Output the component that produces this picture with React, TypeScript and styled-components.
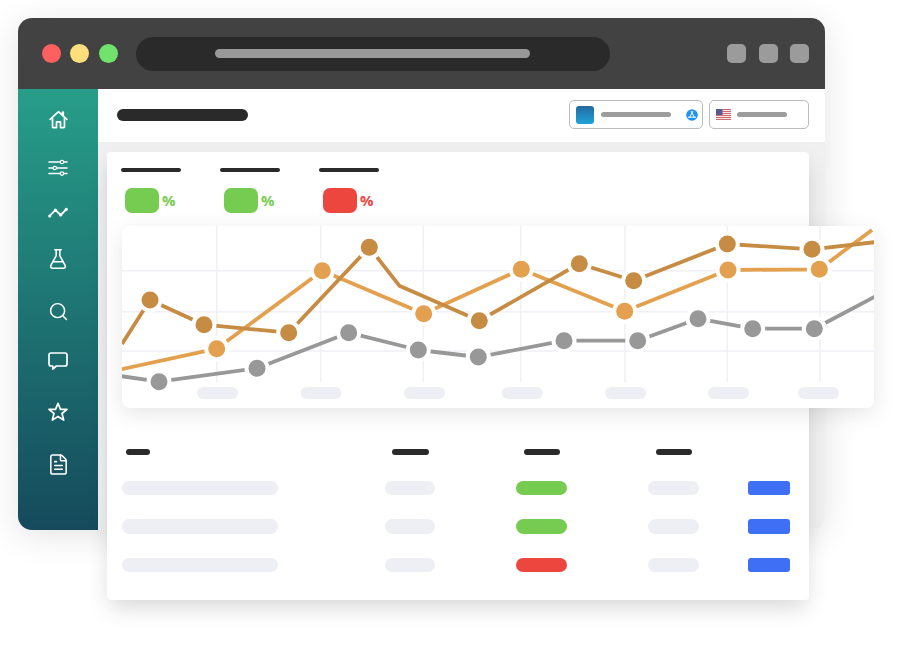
import React from "react";
import styled, { createGlobalStyle } from "styled-components";
import { FlaskConical, Search, FileText } from "lucide-react";

const GlobalStyle = createGlobalStyle`
  html, body { margin: 0; padding: 0; background: #fff; }
  body { font-family: "Open Sans", "Liberation Sans", sans-serif; }
`;

const Page = styled.div`
  width: 900px;
  height: 650px;
  padding: 18px 0 0 18px;
  box-sizing: border-box;
  overflow: hidden;
`;

const BrowserWindow = styled.div`
  width: 807px;
  height: 512px;
  display: flex;
  flex-direction: column;
  border-radius: 14px;
  box-shadow: 0 6px 34px rgba(0, 0, 0, 0.11);
`;

const TitleBar = styled.header`
  height: 71px;
  flex: none;
  display: flex;
  align-items: center;
  padding: 0 16px 0 23.5px;
  background: #424242;
  border-radius: 14px 14px 0 0;
`;

const Lights = styled.div`
  display: flex;
  gap: 9.5px;
  margin-right: 18px;
`;

const Light = styled.span<{ $color: string }>`
  width: 19px;
  height: 19px;
  border-radius: 50%;
  background: ${(p) => p.$color};
`;

const AddressBar = styled.div`
  width: 474.5px;
  height: 34px;
  border-radius: 17px;
  background: #2a2a2a;
  display: flex;
  align-items: center;
  justify-content: center;
`;

const AddressText = styled.span`
  width: 315px;
  height: 9px;
  border-radius: 5px;
  background: #999;
`;

const WindowButtons = styled.div`
  margin-left: auto;
  display: flex;
  gap: 12.5px;
`;

const WindowButton = styled.span`
  width: 19px;
  height: 19px;
  border-radius: 5px;
  background: #9b9b9b;
`;

const Content = styled.div`
  flex: 1;
  min-height: 0;
  display: flex;
`;

const Sidebar = styled.nav`
  width: 80px;
  flex: none;
  background: linear-gradient(180deg, #279e89 0%, #154a5c 100%);
  border-radius: 0 0 0 14px;
`;

const SidebarIcons = styled.div`
  display: flex;
  flex-direction: column;
  align-items: center;
  padding-top: 20px;
  color: #fff;
`;

const IconSlot = styled.div<{ $gap: number }>`
  height: 20px;
  display: flex;
  align-items: center;
  justify-content: center;
  margin-bottom: ${(p) => p.$gap}px;
`;

const Main = styled.main`
  flex: 1;
  min-width: 0;
  display: flex;
  flex-direction: column;
`;

const TopBar = styled.div`
  height: 53px;
  flex: none;
  display: flex;
  align-items: center;
  padding: 0 16px 0 18.5px;
  background: #fff;
  box-sizing: border-box;
`;

const PageTitle = styled.span`
  width: 131.5px;
  height: 12.5px;
  border-radius: 7px;
  background: #2a2a2a;
  margin-top: -1px;
`;

const Selects = styled.div`
  margin-left: auto;
  margin-top: -2px;
  display: flex;
  gap: 6px;
`;

const Select = styled.div<{ $width: number }>`
  width: ${(p) => p.$width}px;
  height: 29px;
  box-sizing: border-box;
  border: 1px solid #bcbcbc;
  border-radius: 5px;
  display: flex;
  align-items: center;
  padding: 0 4px 0 6px;
`;

const AppThumb = styled.span`
  width: 18px;
  height: 18px;
  border-radius: 3px;
  background: linear-gradient(180deg, #24689f 0%, #1ea5da 100%);
  margin-right: 7px;
`;

const SelectLabel = styled.span<{ $width: number }>`
  width: ${(p) => p.$width}px;
  height: 5px;
  border-radius: 3px;
  background: #9d9d9d;
`;

const StoreIcon = styled.svg`
  margin-left: auto;
  display: block;
`;

const FlagIcon = styled.svg`
  margin-right: 6px;
  display: block;
`;

const Body = styled.div`
  flex: 1;
  min-height: 0;
  padding: 10px 0 0 9px;
  background: #f0f0f0;
  border-radius: 0 0 14px 0;
`;

const Report = styled.section`
  width: 702px;
  height: 448px;
  box-sizing: border-box;
  padding: 16px 0 0 15px;
  background: #fff;
  border-radius: 4px;
  box-shadow: 0 10px 22px -3px rgba(0, 0, 0, 0.16);
`;

const Stats = styled.div`
  display: flex;
  gap: 39px;
  margin-left: -1px;
  height: 58px;
`;

const Stat = styled.div`
  width: 60px;
`;

const StatLabel = styled.div`
  width: 60px;
  height: 4px;
  border-radius: 2px;
  background: #2a2a2a;
  margin-bottom: 16px;
`;

const StatValue = styled.div`
  display: flex;
  align-items: center;
  padding-left: 4px;
`;

const StatChip = styled.span<{ $color: string }>`
  width: 34px;
  height: 25px;
  border-radius: 7px;
  background: ${(p) => p.$color};
  margin-right: 3px;
`;

const Percent = styled.span<{ $color: string }>`
  font-family: "Open Sans", "Liberation Sans", sans-serif;
  font-size: 15px;
  line-height: 25px;
  font-weight: 700;
  color: ${(p) => p.$color};
`;

const ChartCard = styled.div`
  width: 752px;
  height: 182px;
  background: #fff;
  border-radius: 8px;
  overflow: hidden;
  box-shadow: 0 6px 22px rgba(0, 0, 0, 0.1);
`;

const ChartSvg = styled.svg`
  display: block;
`;

const Table = styled.div`
  margin-top: 41px;
  display: grid;
  grid-template-columns: 262.5px 131.5px 132px 99.5px 42.5px;
  grid-template-rows: 8.2px;
  grid-auto-rows: 14.5px;
  row-gap: 23.8px;
  align-items: start;
`;

const HeaderCell = styled.span<{ $width: number; $offset: number }>`
  width: ${(p) => p.$width}px;
  height: 6px;
  border-radius: 3px;
  background: #2a2a2a;
  margin-left: ${(p) => p.$offset}px;
`;

const Pill = styled.span<{ $width: number; $color?: string }>`
  width: ${(p) => p.$width}px;
  height: 14.5px;
  border-radius: 7.5px;
  background: ${(p) => p.$color ?? "#eeeff4"};
`;

const ActionButton = styled.span`
  width: 42.5px;
  height: 14.5px;
  border-radius: 3px;
  background: #3f6ff5;
`;

const ICON = { fill: "none", stroke: "currentColor", strokeLinecap: "round", strokeLinejoin: "round" } as const;

const HomeIcon = () => (
  <svg width="19" height="19" viewBox="0 0 20 20" {...ICON} strokeWidth={1.8}>
    <path d="M1.2 9.8 10 1.8l8.8 8" />
    <path d="M3.7 8.4v9.2a.9.9 0 0 0 .9.9h3.3v-6h4.2v6h3.3a.9.9 0 0 0 .9-.9V8.4" />
    <path d="M14.6 2.6v2.6" strokeWidth={2.6} />
  </svg>
);

const SlidersIcon = () => (
  <svg width="20" height="20" viewBox="0 0 20 20" {...ICON} strokeWidth={1.5}>
    <path d="M1 4h18M1 10h18M1 15.6h18" />
    <g fill="#238a7e" strokeWidth={1.2}>
      <circle cx="14" cy="4" r="1.7" />
      <circle cx="6.8" cy="10" r="1.7" />
      <circle cx="14" cy="15.6" r="1.7" />
    </g>
  </svg>
);

const TrendIcon = () => (
  <svg width="20" height="20" viewBox="0 0 20 20" {...ICON} strokeWidth={1.8}>
    <path d="M1.7 14 7.3 8l5.4 5 5.6-5.700" />
    <g fill="currentColor" stroke="none">
      <circle cx="1.7" cy="14" r="1.6" />
      <circle cx="7.3" cy="8" r="1.6" />
      <circle cx="12.7" cy="13" r="1.6" />
      <circle cx="18.3" cy="7.3" r="1.6" />
    </g>
  </svg>
);

const ChatIcon = () => (
  <svg width="20" height="20" viewBox="0 0 20 20" {...ICON} strokeWidth={1.7}>
    <path d="M3 2h14a2 2 0 0 1 2 2v9a2 2 0 0 1-2 2H8.400l-3.600 3v-3H3a2 2 0 0 1-2-2V4a2 2 0 0 1 2-2Z" />
  </svg>
);

const StarIcon = () => (
  <svg width="20" height="20" viewBox="0 0 20 20" {...ICON} strokeWidth={1.7}>
    <path d="M10 1.300l2.500 6h6.500l-5 4.200 1.700 6.600L10 14.500l-5.700 3.600 1.700-6.600-5-4.200h6.500Z" />
  </svg>
);

type Pt = [number, number];

const dark: Pt[] = [[150, 300], [204, 324.7], [288.7, 332.7], [369.3, 247.3], [479.3, 320.7], [579.3, 263.7], [633.7, 280.7], [727.3, 244], [812, 249.3]];
const darkLine: Pt[] = [[122, 344], [150, 300], [204, 324.7], [288.7, 332.7], [369.3, 247.3], [399.3, 285.7], [479.3, 320.7], [579.3, 263.7], [633.7, 280.7], [727.3, 244], [812, 249.3], [876, 242]];
const light: Pt[] = [[216.7, 348.7], [322.3, 270.7], [423.7, 313.7], [521.3, 269.3], [624.7, 311.3], [728, 270], [819.3, 269.3]];
const lightLine: Pt[] = [[120, 369.5], ...light, [872, 230]];
const gray: Pt[] = [[159, 381.7], [257, 368.3], [348.7, 332.7], [418.3, 350], [478.3, 357], [564, 340.7], [637.7, 340.7], [698, 318.7], [752.7, 328.7], [814.3, 328.7]];
const grayLine: Pt[] = [[120, 376], ...gray, [876, 296]];

const ORIGIN_X = 122;
const ORIGIN_Y = 226;

const vGrid = [216.7, 320.7, 423.3, 520.7, 625, 727.3, 820];
const hGrid = [270.7, 311.7, 351];
const ticks = [197, 300.5, 404, 501.7, 605, 708, 798];

const Series = ({ line, points, color }: { line: Pt[]; points: Pt[]; color: string }) => (
  <g>
    <polyline points={line.map((p) => p.join(",")).join(" ")} fill="none" stroke={color} strokeWidth={3.8} strokeLinejoin="round" />
    {points.map(([x, y]) => (
      <g key={`${x}-${y}`}>
        <circle cx={x} cy={y} r={12.5} fill="#fff" />
        <circle cx={x} cy={y} r={8.5} fill={color} />
      </g>
    ))}
  </g>
);

const Chart = () => (
  <ChartSvg width="752" height="182" viewBox={`${ORIGIN_X} ${ORIGIN_Y} 752 182`}>
    {vGrid.map((x) => (
      <line key={x} x1={x} x2={x} y1={226} y2={382} stroke="#f0f0f6" strokeWidth={1.6} />
    ))}
    {hGrid.map((y) => (
      <line key={y} x1={122} x2={874} y1={y} y2={y} stroke="#f0f0f6" strokeWidth={1.6} />
    ))}
    {ticks.map((x) => (
      <rect key={x} x={x} y={387} width={41} height={12} rx={6} fill="#eeeff4" />
    ))}
    <Series line={grayLine} points={gray} color="#989898" />
    <Series line={lightLine} points={light} color="#e3a04e" />
    <Series line={darkLine} points={dark} color="#c68c43" />
  </ChartSvg>
);

const rows = ["#76cc50", "#76cc50", "#ec463e"];
const stats = [
  { chip: "#76cc50", text: "#76cc50" },
  { chip: "#76cc50", text: "#76cc50" },
  { chip: "#ec463e", text: "#ec463e" },
];

export default function App() {
  return (
    <>
      <GlobalStyle />
      <Page>
        <BrowserWindow>
          <TitleBar>
            <Lights>
              <Light $color="#fe6060" />
              <Light $color="#ffdf7c" />
              <Light $color="#71e26c" />
            </Lights>
            <AddressBar>
              <AddressText />
            </AddressBar>
            <WindowButtons>
              <WindowButton />
              <WindowButton />
              <WindowButton />
            </WindowButtons>
          </TitleBar>
          <Content>
            <Sidebar>
              <SidebarIcons>
                <IconSlot $gap={29}><HomeIcon /></IconSlot>
                <IconSlot $gap={24}><SlidersIcon /></IconSlot>
                <IconSlot $gap={27}><TrendIcon /></IconSlot>
                <IconSlot $gap={32}><FlaskConical size={22} strokeWidth={1.7} /></IconSlot>
                <IconSlot $gap={30}><Search size={21} strokeWidth={1.7} /></IconSlot>
                <IconSlot $gap={31}><ChatIcon /></IconSlot>
                <IconSlot $gap={32}><StarIcon /></IconSlot>
                <IconSlot $gap={0}><FileText size={23} strokeWidth={1.6} /></IconSlot>
              </SidebarIcons>
            </Sidebar>
            <Main>
              <TopBar>
                <PageTitle />
                <Selects>
                  <Select $width={134}>
                    <AppThumb />
                    <SelectLabel $width={70} />
                    <StoreIcon width="12" height="12" viewBox="0 0 12 12">
                      <circle cx="6" cy="6" r="5.8" fill="#1f93f5" />
                      <path d="M6.800 2.400 3.600 8.400M5.200 2.400l3.200 6M2.400 8.200h7.200" stroke="#fff" strokeWidth="1" strokeLinecap="round" fill="none" />
                    </StoreIcon>
                  </Select>
                  <Select $width={100}>
                    <FlagIcon width="15" height="11" viewBox="0 0 15 11">
                      <rect width="15" height="11" fill="#f6e6e6" />
                      {[0, 2, 4, 6, 8, 10].map((y) => (
                        <rect key={y} y={y} width="15" height="1" fill="#cf6a72" />
                      ))}
                      <rect width="6.5" height="6" fill="#5a5a8e" />
                    </FlagIcon>
                    <SelectLabel $width={50} />
                  </Select>
                </Selects>
              </TopBar>
              <Body>
                <Report>
                  <Stats>
                    {stats.map((s, i) => (
                      <Stat key={i}>
                        <StatLabel />
                        <StatValue>
                          <StatChip $color={s.chip} />
                          <Percent $color={s.text}>%</Percent>
                        </StatValue>
                      </Stat>
                    ))}
                  </Stats>
                  <ChartCard>
                    <Chart />
                  </ChartCard>
                  <Table>
                    <HeaderCell $width={24} $offset={4} />
                    <HeaderCell $width={37.5} $offset={7} />
                    <HeaderCell $width={36} $offset={8} />
                    <HeaderCell $width={36} $offset={8} />
                    <span />
                    {rows.map((color, i) => (
                      <React.Fragment key={i}>
                        <Pill $width={156} />
                        <Pill $width={50.5} />
                        <Pill $width={51} $color={color} />
                        <Pill $width={51} />
                        <ActionButton />
                      </React.Fragment>
                    ))}
                  </Table>
                </Report>
              </Body>
            </Main>
          </Content>
        </BrowserWindow>
      </Page>
    </>
  );
}
